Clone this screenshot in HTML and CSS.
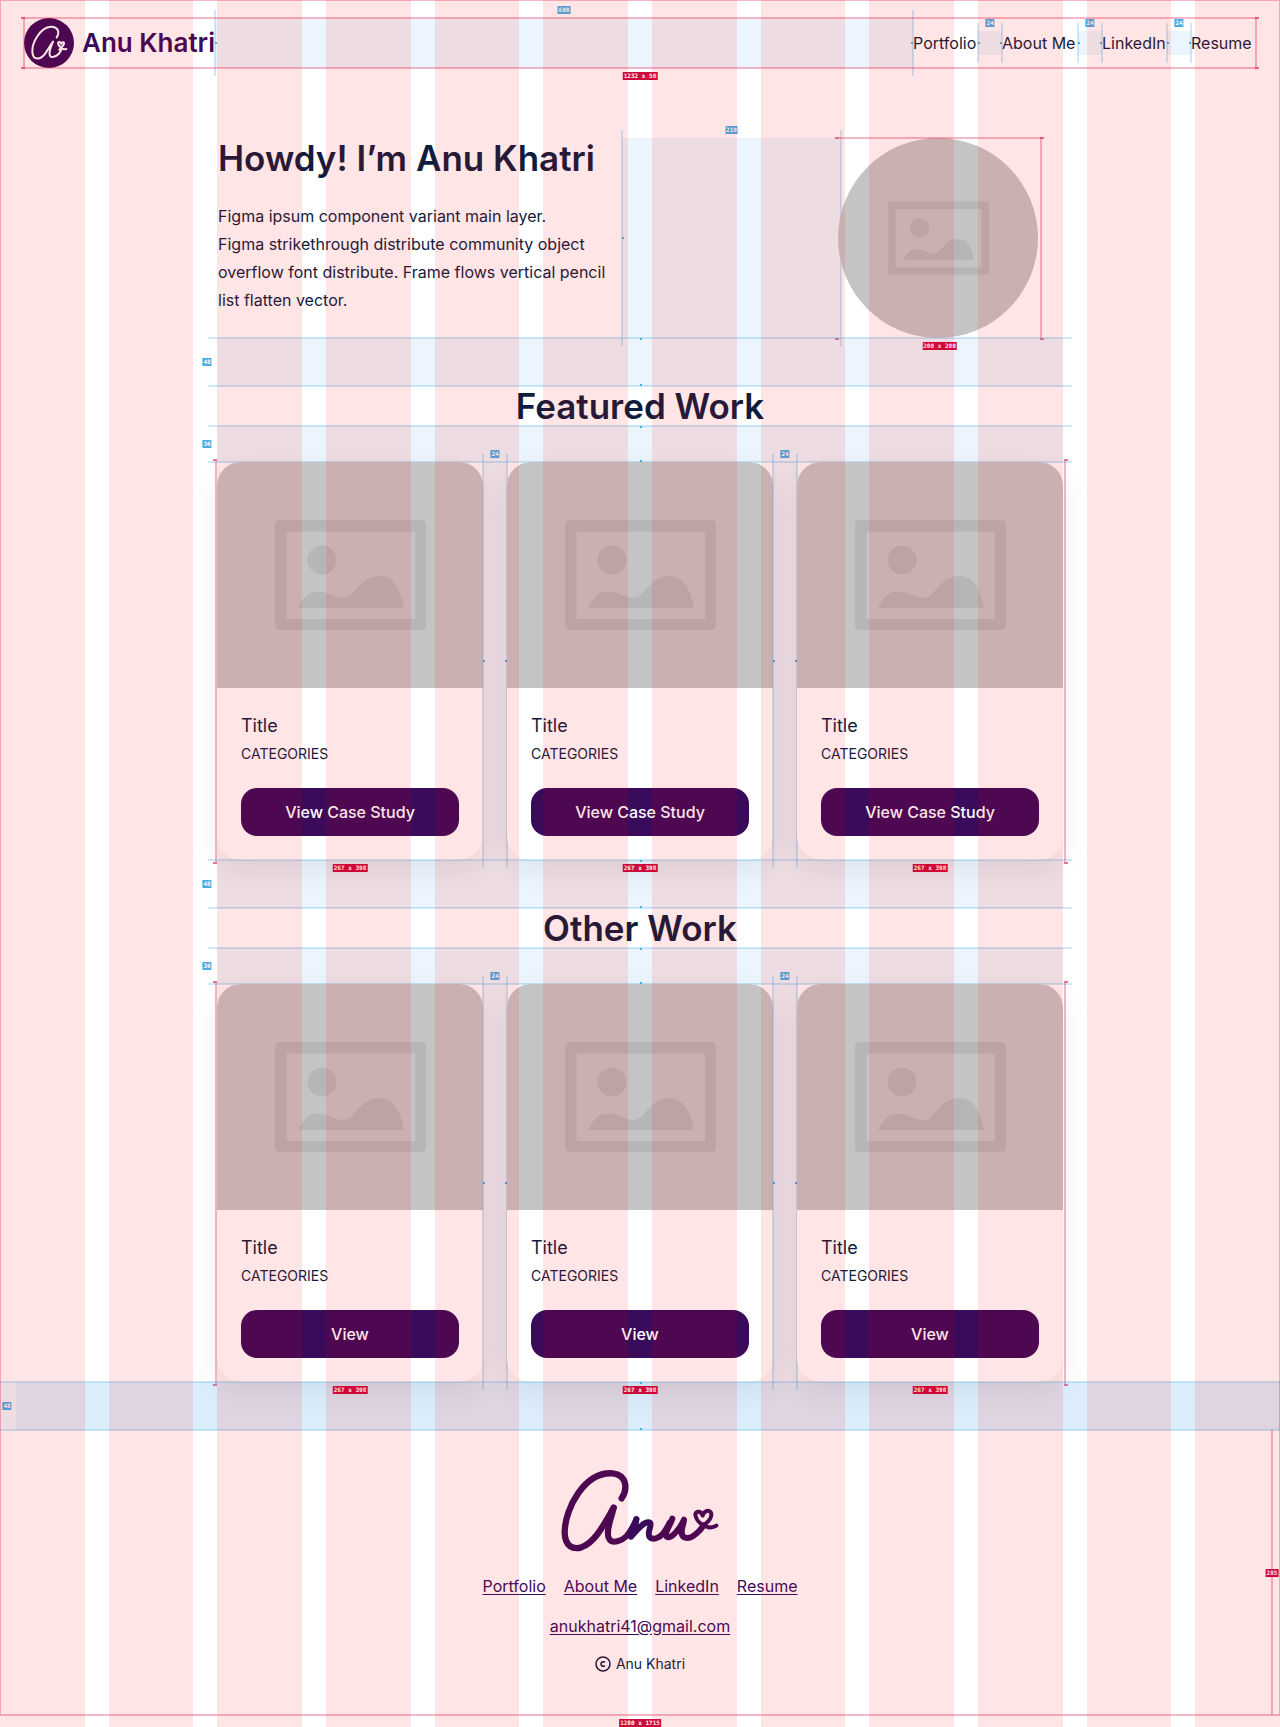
FILE: index.html
```html
<!DOCTYPE html>
<html lang="en">
<head>
<meta charset="utf-8">
<meta name="viewport" content="width=device-width, initial-scale=1">
<title>Anu Khatri</title>
<link rel="stylesheet" href="styles.css">
</head>
<body>
<svg class="defs" aria-hidden="true">
  <symbol id="placeholder" viewBox="0 0 151 110">
    <path fill-rule="evenodd" d="M5 0H146Q151 0 151 5V105Q151 110 146 110H5Q0 110 0 105V5Q0 0 5 0ZM11.500 11.500V99H140V11.500Z"/>
    <circle cx="47" cy="40" r="14.500"/>
    <path d="M23 88C30 74 36 71.500 43 71.500C52 71.500 60 78 69 78C80 78 84 56 105 56C118 56 126 70 129 88Z"/>
  </symbol>
</svg>
<div class="page">
  <header class="header">
    <a class="brand" href="#">
      <svg class="brand-mark" viewBox="72 53 150 150" aria-hidden="true">
        <circle cx="147" cy="128" r="75"/>
        <path d="M170 111C181 94 172 78 153 79C119 81 95 130 97 155C99 182 122 179 136 159Q148 141 159 124C148 149 143 171 158 170C174 168 185 153 184 143M184 143C176 137 171 127 177 125C181 124 183 128 184 131C185 127 189 124 192 127C195 134 182 143 178 148M184 143Q190 149 199 146"/>
      </svg>
      <span class="brand-name">Anu Khatri</span>
    </a>
    <div class="gap-x gap-header"><span class="tag tag-blue">698</span></div>
    <nav class="nav">
      <a href="#">Portfolio</a>
      <div class="gap-x gap-nav"><span class="tag tag-blue">24</span></div>
      <a href="#">About Me</a>
      <div class="gap-x gap-nav"><span class="tag tag-blue">24</span></div>
      <a href="#">LinkedIn</a>
      <div class="gap-x gap-nav"><span class="tag tag-blue">24</span></div>
      <a href="#">Resume</a>
    </nav>
    <div class="frame frame-header"><span class="tag tag-red">1232 x 50</span></div>
  </header>

  <main class="main">
    <section class="hero">
      <div class="hero-text">
        <h1>Howdy! I’m Anu Khatri</h1>
        <p>Figma ipsum component variant main layer.<br>Figma strikethrough distribute community object<br>overflow font distribute. Frame flows vertical pencil<br>list flatten vector.</p>
      </div>
      <div class="gap-hero"><div class="gap-x"><span class="tag tag-blue">219</span></div></div>
      <div class="portrait">
        <div class="portrait-disc"><svg class="icon-small" aria-hidden="true"><use href="#placeholder"/></svg></div>
        <div class="frame frame-portrait"><span class="tag tag-red">200 x 200</span></div>
      </div>
    </section>
    <div class="gap-y gap-48"><span class="tag tag-blue">48</span></div>
    <h2>Featured Work</h2>
    <div class="gap-y gap-36"><span class="tag tag-blue">36</span></div>
    <section class="cards">
      <article class="card">
        <div class="card-image"><svg class="icon-large" aria-hidden="true"><use href="#placeholder"/></svg></div>
        <div class="card-body"><h3>Title</h3><p>CATEGORIES</p><button type="button">View Case Study</button></div>
        <span class="tag tag-red">267 x 398</span>
      </article>
      <div class="gap-x gap-card"><span class="tag tag-blue">24</span></div>
      <article class="card">
        <div class="card-image"><svg class="icon-large" aria-hidden="true"><use href="#placeholder"/></svg></div>
        <div class="card-body"><h3>Title</h3><p>CATEGORIES</p><button type="button">View Case Study</button></div>
        <span class="tag tag-red">267 x 398</span>
      </article>
      <div class="gap-x gap-card"><span class="tag tag-blue">24</span></div>
      <article class="card">
        <div class="card-image"><svg class="icon-large" aria-hidden="true"><use href="#placeholder"/></svg></div>
        <div class="card-body"><h3>Title</h3><p>CATEGORIES</p><button type="button">View Case Study</button></div>
        <span class="tag tag-red">267 x 398</span>
      </article>
      <div class="frame frame-cards"></div>
    </section>
    <div class="gap-y gap-48"><span class="tag tag-blue">48</span></div>
    <h2>Other Work</h2>
    <div class="gap-y gap-36"><span class="tag tag-blue">36</span></div>
    <section class="cards">
      <article class="card">
        <div class="card-image"><svg class="icon-large" aria-hidden="true"><use href="#placeholder"/></svg></div>
        <div class="card-body"><h3>Title</h3><p>CATEGORIES</p><button type="button">View</button></div>
        <span class="tag tag-red">267 x 398</span>
      </article>
      <div class="gap-x gap-card"><span class="tag tag-blue">24</span></div>
      <article class="card">
        <div class="card-image"><svg class="icon-large" aria-hidden="true"><use href="#placeholder"/></svg></div>
        <div class="card-body"><h3>Title</h3><p>CATEGORIES</p><button type="button">View</button></div>
        <span class="tag tag-red">267 x 398</span>
      </article>
      <div class="gap-x gap-card"><span class="tag tag-blue">24</span></div>
      <article class="card">
        <div class="card-image"><svg class="icon-large" aria-hidden="true"><use href="#placeholder"/></svg></div>
        <div class="card-body"><h3>Title</h3><p>CATEGORIES</p><button type="button">View</button></div>
        <span class="tag tag-red">267 x 398</span>
      </article>
      <div class="frame frame-cards"></div>
    </section>
  </main>
  <div class="gap-y gap-48 gap-page"><span class="tag tag-blue">48</span></div>

  <footer class="footer">
    <svg class="signature" viewBox="60 85 480 249" role="img" aria-label="Anu">
      <path d="M245 173C263 146 262 103 218 98C135 92 75 201 74 275C75 318 99 327 124 320C164 307 191 253 221 201" stroke-width="19"/>
      <path d="M221 201C218 227 192 275 209 297C220 311 247 299 260 286C273 271 282 252 289 236" stroke-width="18"/>
      <path d="M289 236C287 260 272 278 273 288C289 271 309 244 326 245C342 247 318 276 329 289C338 300 358 292 371 277Q381 262 389 246" stroke-width="18"/>
      <path d="M397 234C391 254 373 276 379 287C392 300 421 262 432 237C430 258 417 276 431 289C447 299 469 280 481 267L491 254" stroke-width="18"/>
      <path d="M491 254C507 242 518 230 513 216C506 205 491 211 488 225C482 207 462 211 467 226C470 242 487 254 503 259Q517 263 529 255" stroke-width="12"/>
    </svg>
    <nav class="footer-links">
      <a href="#">Portfolio</a><a href="#">About Me</a><a href="#">LinkedIn</a><a href="#">Resume</a>
    </nav>
    <a class="email" href="mailto:anukhatri41@gmail.com">anukhatri41@gmail.com</a>
    <p class="copyright">
      <svg viewBox="0 0 16 16" aria-hidden="true"><circle cx="8" cy="8" r="7"/><path d="M10 6.500A2.300 2.300 0 1 0 10 9.500"/></svg>
      Anu Khatri
    </p>
    <div class="footer-rule"><span class="tag tag-red">285</span></div>
  </footer>
  <div class="frame-page"><span class="tag tag-red">1280 x 1715</span></div>
  <div class="columns" aria-hidden="true"><i></i><i></i><i></i><i></i><i></i><i></i><i></i><i></i><i></i><i></i><i></i><i></i></div>
</div>
</body>
</html>
```
FILE: styles.css
```css
:root {
  --ink: #101c3e;
  --purple: #3a0a5b;
  --line-blue: rgba(72, 172, 230, .27);
  --fill-blue: rgba(72, 160, 232, .1);
  --line-red: rgba(220, 16, 70, .3);
}

* { box-sizing: border-box; }

body {
  margin: 0;
  background: #fff;
  color: var(--ink);
  font: 16px/28px Inter, sans-serif;
}

h1, h2, h3, p { margin: 0; }
a { color: inherit; text-decoration: none; }
.defs { position: absolute; width: 0; height: 0; }

.page {
  position: relative;
  padding-bottom: 12px;
  overflow: hidden;
}

/* Header */
.header {
  position: relative;
  display: flex;
  align-items: center;
  margin: 0 24px;
  padding: 18px 0;
}
.brand {
  display: flex;
  align-items: center;
  gap: 8px;
  width: 191px;
  color: var(--purple);
  white-space: nowrap;
}
.brand-mark { width: 50px; height: 50px; fill: var(--purple); }
.brand-mark path {
  fill: none;
  stroke: #fff;
  stroke-width: 6;
  stroke-linecap: round;
  stroke-linejoin: round;
}
.brand-name { font-size: 26px; font-weight: 600; line-height: 32px; }
.gap-header { flex: 1; height: 50px; }
.nav {
  display: grid;
  grid-template-columns: 65px 24px 76px 24px 65px 24px 65px;
  align-items: center;
  white-space: nowrap;
}
.nav .gap-x { height: 24px; }

/* Content */
.main {
  max-width: 846px;
  margin: 0 auto;
  padding-top: 52px;
}
.hero { display: flex; padding: 0 25px 0 1px; }
.hero-text { width: 404px; white-space: nowrap; }
h1, h2 { font-size: 35px; font-weight: 600; line-height: 40px; }
h1 { margin-bottom: 24px; }
h2 { text-align: center; }
.gap-hero { position: relative; flex: 1; }
.portrait { position: relative; width: 200px; height: 200px; }
.portrait-disc {
  display: flex;
  align-items: center;
  justify-content: center;
  height: 100%;
  border-radius: 50%;
  background: #c4c4c4;
}
.icon-small { width: 101px; height: 74px; fill: rgba(0, 0, 0, .07); }
.icon-large { width: 151px; height: 110px; fill: rgba(0, 0, 0, .07); }

.cards {
  position: relative;
  display: grid;
  grid-template-columns: 1fr 24px 1fr 24px 1fr;
}
.card {
  position: relative;
  border-radius: 24px;
  background: #fff;
  box-shadow: 0 10px 28px rgba(0, 0, 0, .08);
}
.card-image {
  display: flex;
  align-items: center;
  justify-content: center;
  height: 226px;
  border-radius: 24px 24px 0 0;
  background: #c4c4c4;
}
.card-body { padding: 24px; }
.card h3 { font-size: 18px; font-weight: 400; }
.card p { margin-bottom: 20px; font-size: 14px; }
.card button {
  display: block;
  width: 100%;
  height: 48px;
  border: 0;
  border-radius: 16px;
  background: var(--purple);
  color: #fff;
  font: 500 16px/24px Inter, sans-serif;
}

/* Footer */
.footer {
  position: relative;
  display: flex;
  flex-direction: column;
  align-items: center;
  padding: 39px 0 37px;
}
.signature {
  width: 160px;
  height: 83px;
  margin-bottom: 20px;
  fill: none;
  stroke: var(--purple);
  stroke-linecap: round;
  stroke-linejoin: round;
}
.footer-links { display: flex; gap: 18px; margin-bottom: 12px; }
.footer a { color: var(--purple); text-decoration: underline; text-underline-offset: 2px; }
.copyright {
  display: flex;
  align-items: center;
  gap: 5px;
  margin-top: 10px;
  font-size: 14px;
}
.copyright svg {
  width: 16px;
  height: 16px;
  fill: none;
  stroke: var(--ink);
  stroke-width: 1.500;
}

/* Spacing guides */
.gap-x, .gap-y { position: relative; background: var(--fill-blue); }
.gap-x::before, .gap-y::before { content: ""; position: absolute; }
.gap-x::before {
  inset: -8px -1px;
  border: solid var(--line-blue);
  border-width: 0 2px;
}
.gap-y::before {
  inset: -1px -9px;
  border: solid var(--line-blue);
  border-width: 2px 0;
}
.gap-x::after {
  content: "";
  position: absolute;
  inset: calc(50% - 1px) 0 auto;
  height: 2px;
  border: solid #48ace6;
  border-width: 0 2px;
}
.gap-y::after {
  content: "";
  position: absolute;
  inset: 0 auto 0 50%;
  width: 2px;
  border: solid #48ace6;
  border-width: 2px 0;
}
.gap-48 { height: 48px; }
.gap-36 { height: 36px; }
.gap-hero .gap-x { position: absolute; inset: 0 -3px 0 0; }
.gap-page { background: linear-gradient(to right, transparent 16px, var(--fill-blue) 16px), var(--fill-blue); }

/* Measured frames */
.frame { position: absolute; border: 2px solid var(--line-red); pointer-events: none; }
.frame::before {
  content: "";
  position: absolute;
  inset: -4px;
  background:
    linear-gradient(#d81b52, #d81b52) 0 2px / 4px 2px,
    linear-gradient(#d81b52, #d81b52) 0 calc(100% - 2px) / 4px 2px,
    linear-gradient(#d81b52, #d81b52) 100% 2px / 4px 2px,
    linear-gradient(#d81b52, #d81b52) 100% calc(100% - 2px) / 4px 2px;
  background-repeat: no-repeat;
  opacity: .6;
}
.frame-header { inset: 17px -1px; }
.frame-portrait { inset: -1px -4px 0 1px; border-bottom: 0; border-left: 0; }
.frame-cards { inset: -1px -3px -2px -2px; border-width: 0 2px; }
.frame-page {
  position: absolute;
  inset: 0 0 11px;
  border: 1px solid var(--line-red);
  border-bottom-width: 2px;
}
.footer-rule {
  position: absolute;
  inset: 0 7px 0 auto;
  width: 2px;
  background: var(--line-red);
}

/* Measurement tags */
.tag {
  position: absolute;
  z-index: 1;
  padding: 0 1px;
  color: #fff;
  font: 700 6px/8px "DejaVu Sans Mono", monospace;
  white-space: nowrap;
  transform: translateX(-50%);
}
.tag-blue { background: #48ace6; }
.tag-red { background: #cc0a3c; }
.gap-x .tag { left: 50%; top: -12px; }
.gap-y .tag { left: -10px; top: calc(50% - 4px); }
.gap-page .tag { left: 7px; }
.frame .tag, .frame-page .tag { left: 50%; top: calc(100% + 5px); }
.frame-portrait .tag, .card .tag { left: 50%; top: calc(100% + 4px); }
.footer-rule .tag { left: 1px; top: calc(50% - 4px); }

/* Layout grid drawn above everything */
.columns {
  position: absolute;
  z-index: 2;
  inset: 0;
  display: grid;
  grid-template-columns: repeat(12, 1fr);
  gap: 24px;
  pointer-events: none;
}
.columns i { background: rgba(255, 0, 0, .1); }
```
